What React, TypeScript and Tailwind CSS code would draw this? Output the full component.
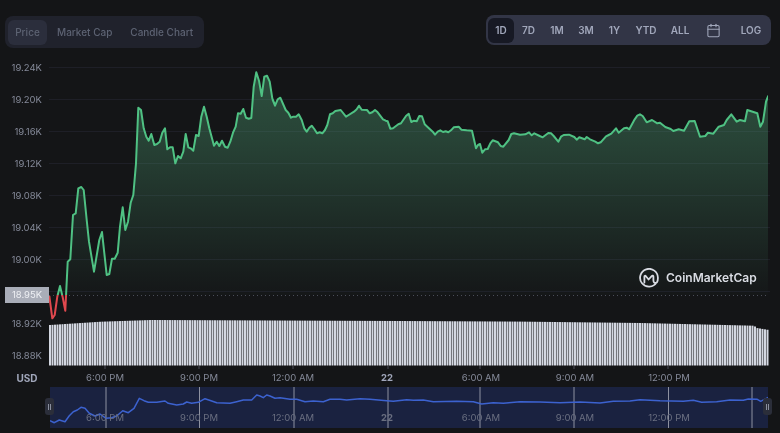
import { Calendar } from "lucide-react";

const font = "font-['Inter','Noto_Sans',sans-serif]";

const ranges = [
  { label: "1D", width: "w-[26px]", active: true },
  { label: "7D", width: "w-[29px]" },
  { label: "1M", width: "w-[28px]" },
  { label: "3M", width: "w-[30px]" },
  { label: "1Y", width: "w-[27px]" },
  { label: "YTD", width: "w-[36px]" },
  { label: "ALL", width: "w-[32px]" },
];

const yLabels = ["19.24K", "19.20K", "19.16K", "19.12K", "19.08K", "19.04K", "19.00K", "18.96K", "18.92K", "18.88K"];
const xLabels = ["6:00 PM", "9:00 PM", "12:00 AM", "22", "6:00 AM", "9:00 AM", "12:00 PM"];
const xTicks = [105, 199, 293, 388, 480, 574, 668];

// traced from zoomed crops: [x, y, x, y, ...] with crop origin
const toPage = (raw: number[], ox: number, oy: number) => {
  const out: string[] = [];
  for (let i = 0; i < raw.length; i += 2) {
    out.push(`${(ox + raw[i] / 3).toFixed(1)},${(oy + raw[i + 1] / 3).toFixed(1)}`);
  }
  return out;
};

const priceA = [28,708,37,775,44,765,52,710,60,678,68,712,76,752,83,605,91,598,99,465,107,460,115,385,124,381,131,390,140,480,147,545,162,635,178,540,186,516,200,645,208,642,216,596,224,596,233,578,240,500,248,442,256,510,264,485,272,428,280,405,288,310,295,143,303,150,311,205,319,230,326,242,334,222,343,255,351,252,359,245,367,218,375,205,382,268,390,262,398,262,406,310,414,288,422,295,430,275,437,222,445,262,452,265,460,272,468,225,476,228,484,170,492,140,500,170,508,205,522,257,530,245,538,258,546,242,555,260,563,263,571,245,579,218,587,200,594,160,602,161,610,147,618,173,626,176,634,174,641,80,649,37,657,62,665,108,673,50,681,47,689,65,697,115,705,135];
const priceB = [8,120,15,137,23,118,31,113,47,150,55,158,63,173,70,170,78,170,86,163,95,180,103,205,110,215,118,203,125,197,133,207,141,220,149,217,157,220,165,210,172,195,180,163,188,160,196,153,212,150,228,170,236,165,252,155,260,148,267,137,275,149,291,150,299,160,307,157,315,150,323,157,339,178,347,182,353,184,361,206,369,205,385,193,393,190,408,168,416,161,424,186,432,182,440,184,448,168,456,169,464,193,472,200,488,215,495,224,503,215,511,211,519,216,527,214,535,217,543,211,551,202,566,200,574,209,590,211,606,212,618,265,624,255,630,252,637,278,645,268,653,267,661,250,668,241,684,247,692,258,700,260,716,240,724,222,732,220,750,224];
const priceC = [16,163,27,157,35,166,43,160,59,168,68,172,85,159,93,160,101,168,115,185,123,170,131,165,147,164,163,171,170,179,178,172,194,178,200,171,210,178,226,185,234,190,242,187,258,169,266,165,274,161,288,145,296,158,312,145,320,143,328,148,344,118,352,107,360,103,368,108,380,127,396,120,412,130,420,128,436,141,452,147,460,153,476,148,492,152,508,124,524,123,540,170,556,168,564,158,580,161,596,140,612,135,620,120,634,103,650,125,660,120,675,124,682,90,712,100,721,140,729,125,738,65,745,47];

const pricePoints = [...toPage(priceA, 40, 60), ...toPage(priceB, 270, 60), ...toPage(priceC, 520, 80)];

const overA = [150,452,163,458,178,450,195,455,208,437,220,425,232,420,243,412,255,415,268,430,285,438,300,432,318,445,335,443,350,438,368,422,385,428,402,415,418,385,432,392,445,397,470,397,495,393,505,400,530,405,550,402,560,396,575,400,595,397,615,386,635,393,650,398,690,400,710,395,730,390,755,390,770,375];
const overB = [0,378,10,383,20,375,30,378,45,385,60,383,90,388,110,388,135,395,160,393,190,395,210,388,240,388,260,390,300,386,330,388,380,392,400,394,440,389,460,391,490,390,520,395,590,394,640,395,665,402,700,398,730,400];
const overC = [0,425,60,426,120,428,180,426,240,429,280,424,330,423,360,419,420,422,490,424,520,421,545,427,590,425,630,420,670,421,685,417,712,418,722,424,745,412];

const overviewPoints = [...toPage(overA, 0, 270), ...toPage(overB, 260, 270), ...toPage(overC, 520, 260)];

// volume bar tops, linear between these
const volumeTops = [[49, 325], [100, 321.7], [150, 320], [400, 321], [520, 321.6], [640, 323], [753, 325.7], [756, 328], [768, 330]];
const volumeTop = (x: number) => {
  for (let i = 1; i < volumeTops.length; i++) {
    const [x0, y0] = volumeTops[i - 1];
    const [x1, y1] = volumeTops[i];
    if (x <= x1) return y0 + ((y1 - y0) * (x - x0)) / (x1 - x0);
  }
  return 330;
};
const volumeBars = Array.from({ length: 288 }, (_, i) => 49 + i * 2.5);

const PriceChart = () => (
  <svg viewBox="49 51 722 319" className="h-[319px] w-[722px] shrink-0">
    <defs>
      <linearGradient id="area" x1="0" y1="72" x2="0" y2="295" gradientUnits="userSpaceOnUse">
        <stop offset="0" stopColor="#5cc08a" stopOpacity="0.34" />
        <stop offset="0.3" stopColor="#5cc08a" stopOpacity="0.27" />
        <stop offset="1" stopColor="#5cc08a" stopOpacity="0.01" />
      </linearGradient>
      <clipPath id="above">
        <rect x="49" y="51" width="719" height="244" />
      </clipPath>
      <clipPath id="below">
        <rect x="49" y="295" width="719" height="30" />
      </clipPath>
    </defs>
    <line x1="48.5" y1="56" x2="48.5" y2="366" stroke="#23252d" />
    {[67, 99, 131, 163, 195, 227, 259, 291].map(y => (
      <line key={y} x1="49" y1={y + 0.5} x2="770" y2={y + 0.5} stroke="#1e1f27" />
    ))}
    <polygon
      points={`49,295 ${pricePoints.join(" ")} 768,295`}
      fill="url(#area)"
      clipPath="url(#above)"
    />
    <line x1="49" y1="295.5" x2="768" y2="295.5" stroke="#4a4d58" strokeDasharray="1 3" />
    <polyline
      points={pricePoints.join(" ")}
      fill="none"
      stroke="#e0484e"
      strokeWidth="2"
      strokeLinejoin="round"
      clipPath="url(#below)"
    />
    <polyline
      points={pricePoints.join(" ")}
      fill="none"
      stroke="#4fc183"
      strokeWidth="2"
      strokeLinejoin="round"
      clipPath="url(#above)"
    />
    {volumeBars.map(x => (
      <rect key={x} x={x} y={volumeTop(x)} width="2" height={365.5 - volumeTop(x)} fill="#d3d7e1" />
    ))}
    {xTicks.map(x => (
      <line key={x} x1={x} y1="366" x2={x} y2="369" stroke="#4a4d58" />
    ))}
  </svg>
);

const Logo = () => (
  <div className="absolute left-[639px] top-[217px] flex items-center gap-[7px]">
    <svg viewBox="0 0 20 20" className="h-5 w-5" fill="none" stroke="#d9dce3" strokeWidth="1.8" strokeLinecap="round" strokeLinejoin="round">
      <path d="M17.6 14.4A8.9 8.9 0 1 1 18.9 10c0 1.5-.1 3.2-.9 4.2-.7.9-2 .9-2.8.3-.6-.5-.8-1.2-.8-2.2V8.6c0-.9-.9-1.3-1.5-.7L9.6 11.500 6.700 8c-.5-.5-1.300-.2-1.300.5v6" />
    </svg>
    <span className="whitespace-nowrap text-[12px] font-semibold leading-5 text-[#d9dce3]">CoinMarketCap</span>
  </div>
);

const Handle = ({ className }: { className: string }) => (
  <div className={`absolute top-[11px] flex h-[17px] w-[9px] items-center justify-center gap-px rounded-[3px] bg-[#2b2e3a] ${className}`}>
    <span className="h-[6px] w-px bg-[#8a8f9e]" />
    <span className="h-[6px] w-px bg-[#8a8f9e]" />
  </div>
);

const App = () => {
  return (
    <div className={`relative flex h-[433px] w-[780px] flex-col overflow-hidden bg-[#141517] blur-[0.4px] ${font}`}>
      {/* 상단 탭 */}
      <div className="flex h-[51px] items-start justify-between pl-[5px] pr-[9px] pt-[15px]">
        <div className="mt-px flex h-8 w-[199px] items-center whitespace-nowrap rounded-lg bg-[#20222c] pl-[3px] text-[10px] font-medium text-[#5d6373]">
          <div className="flex h-[25px] w-[39px] items-center justify-center rounded-md bg-[#2b2e3c]">Price</div>
          <div className="pl-[10px] pr-[18px]">Market Cap</div>
          <div>Candle Chart</div>
        </div>
        <div className="flex h-[30px] items-center rounded-lg bg-[#323546] pl-[2px] text-[10px] font-semibold text-[#a1a7bb]">
          {ranges.map(range => (
            <div
              key={range.label}
              className={`flex h-[25px] items-center justify-center rounded-md ${range.width} ${range.active ? "bg-[#171924]" : ""}`}
            >
              {range.label}
            </div>
          ))}
          <div className="flex w-[35px] justify-center">
            <Calendar size={15} strokeWidth={1.7} />
          </div>
          <div className="w-[40px] text-center">LOG</div>
        </div>
      </div>

      {/* 차트 */}
      <div className="relative flex">
        <div className="flex w-[49px] shrink-0 flex-col gap-4 pr-[7px] pt-[9px] text-right text-[9.5px] leading-4 text-[#858a99]">
          {yLabels.map(label => (
            <div key={label} className={label === "18.96K" ? "invisible" : ""}>
              {label}
            </div>
          ))}
        </div>
        <PriceChart />
        <div className="absolute left-[5px] top-[236px] flex h-4 w-[44px] items-center justify-center bg-[#a9adb8] text-[9.5px] text-[#eef0f4]">
          18.95K
        </div>
        <Logo />
      </div>

      {/* 시간 축 */}
      <div className="flex h-[17px] items-center text-[9.5px] text-[#858a99]">
        <div className="w-[58px] pr-[4px] text-center text-[10px] font-bold text-[#a1a7bb]">USD</div>
        <div className="grid w-[658px] grid-cols-7 text-center">
          {xLabels.map(label => (
            <div key={label} className={label === "22" ? "font-bold text-[#a1a7bb]" : ""}>
              {label}
            </div>
          ))}
        </div>
      </div>

      {/* 미니맵 */}
      <div className="relative ml-[50px] h-[41px] w-[718px]">
        <svg viewBox="50 387 718 41" className="h-full w-full">
          <rect x="50" y="387" width="718" height="41" fill="#1a2240" />
          {[106, 199.5, 294, 388, 480, 574, 668.5, 752].map(x => (
            <line key={x} x1={x} y1="387" x2={x} y2="428" stroke="#8d91a0" />
          ))}
          <polyline points={overviewPoints.join(" ")} fill="none" stroke="#3c62cf" strokeWidth="1.5" strokeLinejoin="round" />
        </svg>
        <div className="absolute left-[8px] top-[23px] grid w-[658px] grid-cols-7 text-center text-[9.5px] leading-4 text-[#6a6f80]">
          {xLabels.map(label => (
            <div key={label} className={label === "22" ? "font-bold" : ""}>
              {label}
            </div>
          ))}
        </div>
        <Handle className="left-[-5px]" />
        <Handle className="right-[-4px]" />
      </div>
    </div>
  );
};

export default App;
